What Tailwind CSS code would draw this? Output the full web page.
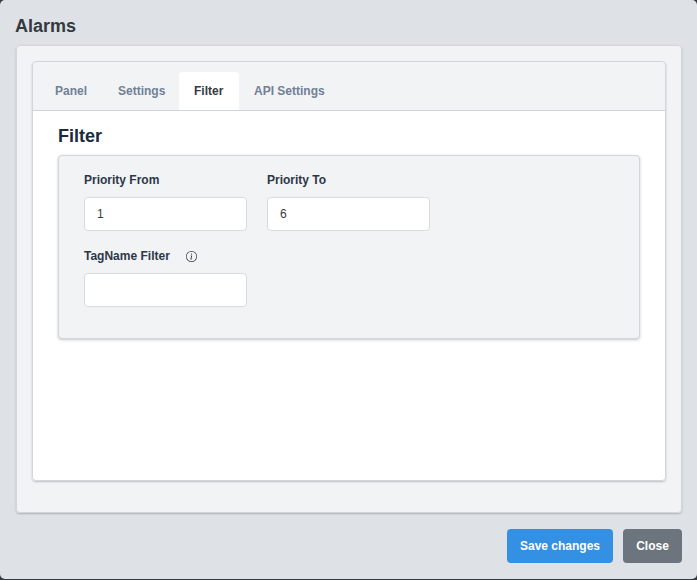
<!DOCTYPE html>
<html>
<head>
<meta charset="utf-8">
<script src="https://cdn.jsdelivr.net/npm/@tailwindcss/browser@4"></script>
</head>
<body class="bg-[#343a40] font-['Liberation_Sans',Arial,sans-serif]">
<div class="w-[697px] h-[579px] bg-[#dee2e6] rounded-[5px] flex flex-col overflow-hidden">
  <h1 class="h-[45px] pl-[15px] pt-[16px] text-[18px] leading-[21px] font-bold text-[#343a40]">Alarms</h1>
  <div class="ml-[16px] w-[666px] h-[468px] p-[16px] bg-[#f1f3f5] rounded-[4px] outline outline-[#d2d5d9] -outline-offset-1 shadow-[0_1px_2px_rgba(0,0,0,0.22)]">
    <div class="h-[420px] bg-white rounded-[4px] outline outline-[#d2d5d9] -outline-offset-1 shadow-[0_1px_2px_rgba(0,0,0,0.22)] overflow-hidden">
      <div class="h-[50px] pt-[11px] pl-[8px] flex bg-[#f1f3f5] border-b border-[#ced4da] text-[12px] font-bold text-[#718096]">
        <div class="w-[62px] pl-[15px] pt-[10px]">Panel</div>
        <div class="w-[77px] pl-[16px] pt-[10px]">Settings</div>
        <div class="w-[60px] h-[38px] pl-[15px] pt-[10px] bg-white rounded-t-[4px] text-[#343a40]">Filter</div>
        <div class="pl-[15px] pt-[10px]">API Settings</div>
      </div>
      <div class="px-[26px]">
        <h2 class="h-[44px] pt-[15px] text-[18px] leading-[21px] font-bold text-[#1a2b3c]">Filter</h2>
        <div class="w-[582px] h-[184px] px-[25px] pt-[17px] bg-[#f1f3f5] rounded-[4px] border border-[#d2d5d9] shadow-[0_1px_3px_rgba(0,0,0,0.22)]">
          <div class="grid grid-cols-[163px_163px] gap-x-[20px] gap-y-[18px]">
            <div>
              <label class="block h-[24px] text-[12px] leading-[14px] font-bold text-[#2d3748]">Priority From</label>
              <input value="1" class="w-[163px] h-[34px] px-[12px] bg-white border border-[#d8dce1] rounded-[4px] text-[12px] text-[#343a40]">
            </div>
            <div>
              <label class="block h-[24px] text-[12px] leading-[14px] font-bold text-[#2d3748]">Priority To</label>
              <input value="6" class="w-[163px] h-[34px] px-[12px] bg-white border border-[#d8dce1] rounded-[4px] text-[12px] text-[#343a40]">
            </div>
            <div>
              <div class="h-[24px] flex items-start gap-[16px]">
                <label class="text-[12px] leading-[14px] font-bold text-[#2d3748]">TagName Filter</label>
                <svg class="w-[11px] h-[11px] mt-[2px]" viewBox="0 0 16 16" fill="#343a40"><path d="M8 15A7 7 0 1 1 8 1a7 7 0 0 1 0 14zm0 1A8 8 0 1 0 8 0a8 8 0 0 0 0 16z"/><path d="M8.93 6.59l-2.29.28-.08.38.45.08c.29.07.35.18.29.47l-.74 3.47c-.19.9.11 1.32.81 1.32.55 0 1.18-.25 1.47-.6l.09-.42c-.2.18-.5.25-.69.25-.27 0-.37-.19-.3-.53L8.93 6.6z"/><circle cx="8" cy="4.5" r="1"/></svg>
              </div>
              <input class="w-[163px] h-[34px] px-[12px] bg-white border border-[#d8dce1] rounded-[4px] text-[12px]">
            </div>
          </div>
        </div>
      </div>
    </div>
  </div>
  <div class="mt-[16px] ml-[507px] flex gap-[10px] text-[12px] font-bold text-white">
    <button class="w-[106px] h-[34px] bg-[#3490e3] rounded-[4px]">Save changes</button>
    <button class="w-[59px] h-[34px] bg-[#6c757d] rounded-[4px]">Close</button>
  </div>
</div>
</body>
</html>
